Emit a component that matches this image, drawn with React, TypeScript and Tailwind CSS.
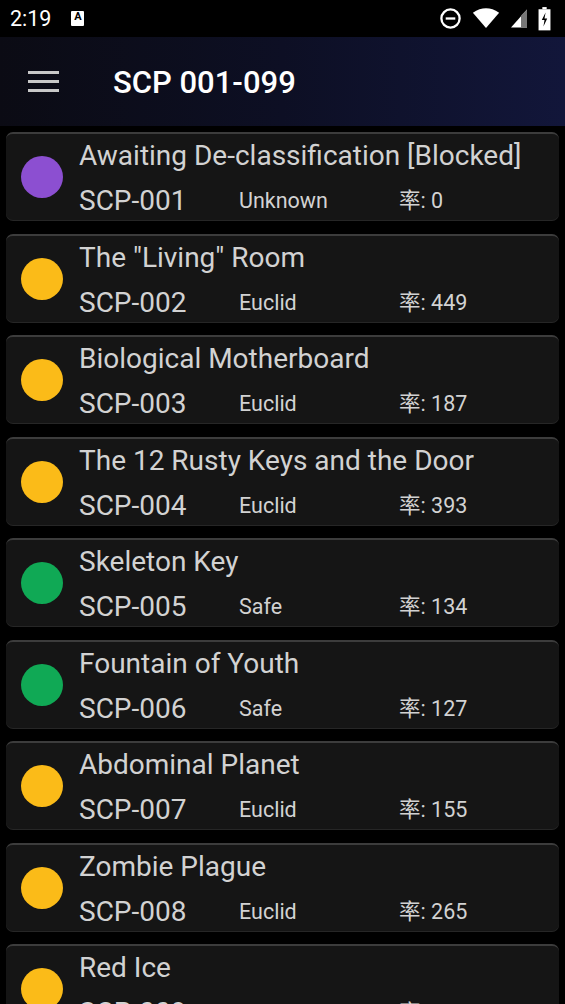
import { FC } from "react";

type Item = { title: string; num: string; cls: string; rate: number };

const items: Item[] = [
  { title: "Awaiting De-classification [Blocked]", num: "SCP-001", cls: "Unknown", rate: 0 },
  { title: 'The "Living" Room', num: "SCP-002", cls: "Euclid", rate: 449 },
  { title: "Biological Motherboard", num: "SCP-003", cls: "Euclid", rate: 187 },
  { title: "The 12 Rusty Keys and the Door", num: "SCP-004", cls: "Euclid", rate: 393 },
  { title: "Skeleton Key", num: "SCP-005", cls: "Safe", rate: 134 },
  { title: "Fountain of Youth", num: "SCP-006", cls: "Safe", rate: 127 },
  { title: "Abdominal Planet", num: "SCP-007", cls: "Euclid", rate: 155 },
  { title: "Zombie Plague", num: "SCP-008", cls: "Euclid", rate: 265 },
  { title: "Red Ice", num: "SCP-009", cls: "Euclid", rate: 311 },
];

const dotColor = (cls: string) =>
  cls === "Safe" ? "bg-[#10a955]" : cls === "Euclid" ? "bg-[#fbbb18]" : "bg-[#8c4fd1]";

const StatusBar: FC = () => (
  <div className="flex h-[37px] items-center justify-between bg-black pl-[10px] pr-[14px] text-white">
    <div className="flex items-center gap-[20px]">
      <span className="text-[21.5px] leading-none">2:19</span>
      <div className="flex h-[15px] w-[13px] items-start justify-center rounded-[1px] bg-white">
        <span className="text-[11px] font-bold leading-[12px] text-black">A</span>
      </div>
    </div>
    <div className="flex items-center gap-[10px]">
      <svg width="23" height="23" viewBox="0 0 24 24" fill="none" stroke="white" strokeWidth="2.4">
        <circle cx="12" cy="12" r="9.5" />
        <line x1="7" y1="12" x2="17" y2="12" />
      </svg>
      <svg width="28" height="21" viewBox="0 0 26 20">
        <path d="M13 19 L0.5 4.5 Q13 -4 25.5 4.5 Z" fill="white" />
      </svg>
      <svg width="18" height="21" viewBox="0 0 18 20">
        <path d="M17 1 L17 19 L1 19 Z" fill="white" />
        <path d="M11 7 L17 1 L17 19 L11 19 Z" fill="#777" />
      </svg>
      <svg width="13" height="24" viewBox="0 0 12 22">
        <rect x="4" y="0" width="4" height="2" fill="white" />
        <rect x="0.5" y="2" width="11" height="19.5" fill="white" />
        <path d="M7 5 L3.5 12 L6 12 L5 18 L8.5 10.5 L6 10.5 Z" fill="black" />
      </svg>
    </div>
  </div>
);

const Card: FC<{ item: Item }> = ({ item }) => (
  <div className="flex h-[88px] rounded-[7px] border-t-[2px] border-[#3c3c3c] bg-[#151515] shadow-[0_1px_0_#262626]">
    <div className={`ml-[15px] h-[42px] w-[42px] shrink-0 self-center rounded-full ${dotColor(item.cls)}`} />
    <div className="ml-[16px] flex min-w-0 flex-col pt-[5px] text-[#d2d2d2]">
      <div className="truncate text-[28px] leading-[34px]">{item.title}</div>
      <div className="mt-[12px] flex h-[32px] items-center leading-[32px]">
        <span className="w-[160px] text-[28px]">{item.num}</span>
        <span className="w-[160px] text-[21.5px]">{item.cls}</span>
        <span className="text-[21.5px]">率: {item.rate}</span>
      </div>
    </div>
  </div>
);

const App: FC = () => (
  <div
    className="h-[1004px] w-[565px] overflow-hidden bg-black"
    style={{ fontFamily: 'Roboto, "Noto Sans CJK SC", sans-serif' }}
  >
    <StatusBar />
    <header className="flex h-[89px] items-center bg-gradient-to-r from-[#0b0b14] via-[#0d0f24] to-[#12163a] shadow-[0_2px_4px_rgba(0,0,0,0.6)]">
      <div className="ml-[28px] flex w-[31px] flex-col gap-[6px]">
        <span className="h-[3px] bg-[#c8c8c8]" />
        <span className="h-[3px] bg-[#c8c8c8]" />
        <span className="h-[3px] bg-[#c8c8c8]" />
      </div>
      <h1 className="ml-[54px] pt-[3px] text-[31px] font-medium text-white">SCP 001-099</h1>
    </header>
    <div className="flex flex-col gap-[13.5px] px-[6px] pt-[6px]">
      {items.map((item) => (
        <Card key={item.num} item={item} />
      ))}
    </div>
  </div>
);

export default App;
